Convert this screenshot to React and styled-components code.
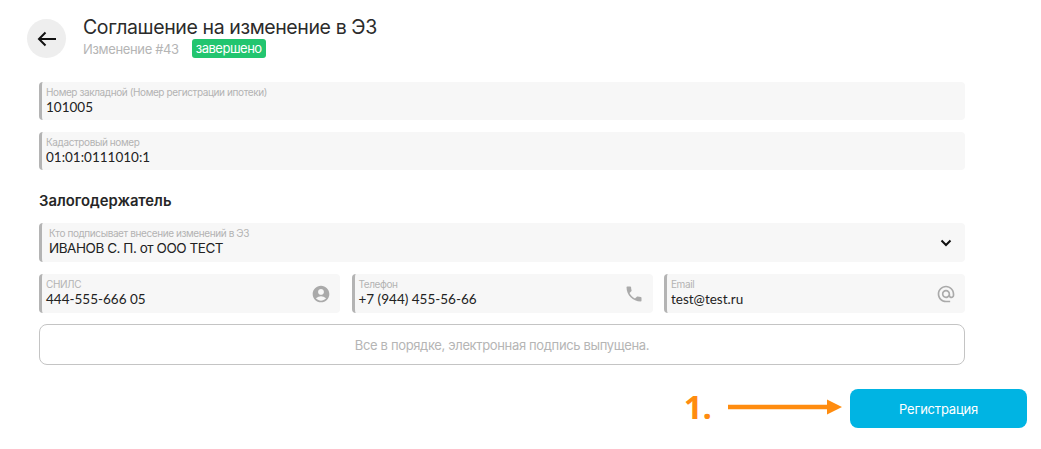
import React from "react";
import styled, { createGlobalStyle } from "styled-components";
import { MdAccountCircle, MdPhone, MdAlternateEmail } from "react-icons/md";

const Global = createGlobalStyle`
  html, body { margin: 0; padding: 0; background: #fff; }
  body { font-family: Inter, "Liberation Sans", sans-serif; overflow: hidden; }
`;

const Page = styled.div`
  width: 1041px;
  height: 449px;
  box-sizing: border-box;
  padding: 19px 14px 0 27px;
`;

const Header = styled.header`
  display: flex;
  gap: 17px;
  height: 39px;
`;

const BackButton = styled.div`
  width: 39px;
  height: 39px;
  border-radius: 50%;
  background: #eeeeee;
  display: flex;
  align-items: center;
  justify-content: center;
  color: #111;
`;

const HeaderText = styled.div`
  display: flex;
  flex-direction: column;
  margin-top: -4px;
`;

const Title = styled.h1`
  margin: 0;
  font-size: 19.5px;
  line-height: 24px;
  letter-spacing: -0.4px;
  font-weight: 400;
  color: #2b2b2b;
  white-space: nowrap;
`;

const SubRow = styled.div`
  display: flex;
  align-items: center;
  gap: 13px;
`;

const Sub = styled.span`
  font-size: 13px;
  line-height: 16px;
  letter-spacing: -0.35px;
  color: #b5b5b5;
`;

const Badge = styled.span`
  background: #22c56f;
  color: #fff;
  border-radius: 3px;
  font-size: 13px;
  line-height: 19px;
  height: 19px;
  letter-spacing: -0.5px;
  padding: 0 4px;
`;

const Form = styled.div`
  width: 926px;
  margin: 24px 0 0 12px;
  display: flex;
  flex-direction: column;
`;

const Field = styled.div`
  height: ${p => p.$h || 38}px;
  margin-bottom: 12px;
  box-sizing: border-box;
  background: #f7f7f7;
  border-left: 3px solid #b4b4b4;
  border-radius: 4px;
  padding: 4px 0 0 ${p => p.$pad || 4}px;
  display: flex;
  align-items: center;
`;

const FieldText = styled.div`
  flex: 1;
  min-width: 0;
  align-self: flex-start;
`;

const Label = styled.div`
  font-size: 10px;
  line-height: 13px;
  letter-spacing: -0.4px;
  color: #b3b3b3;
  white-space: nowrap;
`;

const Value = styled.div`
  font-family: Lato, sans-serif;
  font-size: 13.5px;
  line-height: 18px;
  margin-top: -1px;
  color: #222;
  white-space: nowrap;
`;

const SelectValue = styled(Value)`
  font-family: Inter, sans-serif;
  letter-spacing: -0.45px;
`;

const FieldIcon = styled.div`
  display: flex;
  color: #aaaaaa;
  margin-right: 9px;
  margin-top: -3px;
`;

const Chevron = styled(FieldIcon)`
  color: #111;
  margin-right: 13px;
`;

const SectionTitle = styled.h2`
  margin: 9px 0 11px;
  font-size: 14.8px;
  line-height: 21px;
  font-weight: 600;
  color: #262626;
`;

const Row = styled.div`
  display: grid;
  grid-template-columns: 301px 301px 301px;
  column-gap: 11.5px;
`;

const Notice = styled.div`
  height: 41px;
  box-sizing: border-box;
  border: 1px solid #c4c4c4;
  border-radius: 8px;
  display: flex;
  align-items: center;
  justify-content: center;
  font-size: 13px;
  letter-spacing: -0.35px;
  color: #b5b5b5;
  margin-top: -1px;
`;

const Footer = styled.div`
  display: flex;
  justify-content: flex-end;
  align-items: center;
  margin-top: 22px;
`;

const Step = styled.span`
  font-family: "Open Sans", sans-serif;
  font-size: 33px;
  line-height: 39px;
  font-weight: 700;
  color: #ff8c0f;
  margin-right: 16px;
  margin-bottom: 4px;
`;

const Arrow = styled.svg`
  margin-bottom: 4px;
`;

const Action = styled.div`
  width: 177px;
  height: 39px;
  margin-left: 8px;
  border-radius: 8px;
  background: #00b4e3;
  color: #fff;
  font-size: 13px;
  letter-spacing: -0.2px;
  display: flex;
  align-items: center;
  justify-content: center;
`;

export default function App() {
  return (
    <Page>
      <Global />
      <Header>
        <BackButton>
          <svg width="20" height="16" viewBox="0 0 20 16" fill="none" stroke="currentColor" strokeWidth="2">
            <path d="M19 8H2M8.5 1.5L2 8l6.5 6.5" />
          </svg>
        </BackButton>
        <HeaderText>
          <Title>Соглашение на изменение в ЭЗ</Title>
          <SubRow>
            <Sub>Изменение #43</Sub>
            <Badge>завершено</Badge>
          </SubRow>
        </HeaderText>
      </Header>
      <Form>
        <Field>
          <FieldText>
            <Label>Номер закладной (Номер регистрации ипотеки)</Label>
            <Value>101005</Value>
          </FieldText>
        </Field>
        <Field>
          <FieldText>
            <Label>Кадастровый номер</Label>
            <Value>01:01:0111010:1</Value>
          </FieldText>
        </Field>
        <SectionTitle>Залогодержатель</SectionTitle>
        <Field $h={39} $pad={7}>
          <FieldText>
            <Label>Кто подписывает внесение изменений в ЭЗ</Label>
            <SelectValue>ИВАНОВ С. П. от ООО ТЕСТ</SelectValue>
          </FieldText>
          <Chevron>
            <svg width="12" height="8" viewBox="0 0 12 8" fill="none" stroke="currentColor" strokeWidth="2">
              <path d="M1.5 1.5L6 6l4.500-4.500" />
            </svg>
          </Chevron>
        </Field>
        <Row>
          <Field $h={39}>
            <FieldText>
              <Label>СНИЛС</Label>
              <Value>444-555-666 05</Value>
            </FieldText>
            <FieldIcon><MdAccountCircle size={20} /></FieldIcon>
          </Field>
          <Field $h={39}>
            <FieldText>
              <Label>Телефон</Label>
              <Value>+7 (944) 455-56-66</Value>
            </FieldText>
            <FieldIcon><MdPhone size={20} /></FieldIcon>
          </Field>
          <Field $h={39}>
            <FieldText>
              <Label>Email</Label>
              <Value>test@test.ru</Value>
            </FieldText>
            <FieldIcon><MdAlternateEmail size={20} /></FieldIcon>
          </Field>
        </Row>
        <Notice>Все в порядке, электронная подпись выпущена.</Notice>
      </Form>
      <Footer>
        <Step>1.</Step>
        <Arrow width="114" height="16" viewBox="0 0 114 16">
          <path d="M0 5.800H99V0.500L114 8 99 15.500V10.200H0Z" fill="#ff8c0f" />
        </Arrow>
        <Action>Регистрация</Action>
      </Footer>
    </Page>
  );
}
